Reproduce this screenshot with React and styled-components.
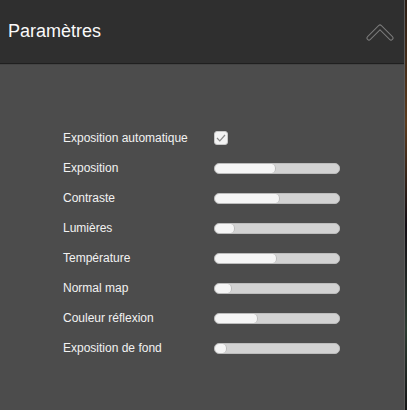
import React from 'react';
import styled, { createGlobalStyle } from 'styled-components';

const GlobalStyle = createGlobalStyle`
  html, body {
    margin: 0;
    padding: 0;
    height: 100%;
    background: linear-gradient(180deg, #2a1d14 0%, #5a3a1c 30%, #120d12 55%, #2c3a30 80%, #151515 100%);
    font-family: "Liberation Sans", Arial, sans-serif;
    overflow: hidden;
  }
`;

const Panel = styled.div`
  width: 405px;
  height: 410px;
  display: flex;
  flex-direction: column;
  background: #4c4c4c;
  border-right: 1px solid #5a5a5a;
  box-sizing: border-box;
`;

const Header = styled.div`
  height: 63px;
  flex: none;
  display: flex;
  align-items: center;
  justify-content: space-between;
  padding: 0 10px 0 8px;
  background: #2f2f2f;
  border-bottom: 1px solid #1f1f1f;
  box-shadow: 0 1px 0 #444;
`;

const Title = styled.h2`
  margin: 0;
  font-size: 18px;
  font-weight: normal;
  color: #fafafa;
`;

const Body = styled.div`
  display: grid;
  grid-template-columns: 151px 126px;
  grid-auto-rows: 30px;
  align-items: center;
  padding: 59px 0 0 63px;
`;

const Label = styled.span`
  font-size: 12px;
  color: #f2f2f2;
`;

const Checkbox = styled.div`
  width: 14px;
  height: 14px;
  box-sizing: border-box;
  border-radius: 3px;
  background: #f3f3f3;
  border: 1px solid #c8c8c8;
  display: flex;
  align-items: center;
  justify-content: center;
`;

const Track = styled.div`
  height: 11px;
  border-radius: 5px;
  background: #d2d2d2;
  border: 1px solid #bcbcbc;
  box-sizing: border-box;
  overflow: hidden;
  display: flex;
`;

const Fill = styled.div`
  height: 100%;
  border-radius: 5px;
  background: #f5f5f5;
  border-right: 1px solid #b8b8b8;
  box-sizing: border-box;
`;

function Chevron() {
  return (
    <svg width="28" height="20" viewBox="0 0 28 20" style={{ marginTop: 2 }}>
      <path d="M3 15 L14 4 L25 15" fill="none" stroke="#7a7a7a" strokeWidth="5" strokeLinecap="round" strokeLinejoin="round" />
      <path d="M3 15 L14 4 L25 15" fill="none" stroke="#2f2f2f" strokeWidth="3" strokeLinecap="round" strokeLinejoin="round" />
    </svg>
  );
}

const sliders = [
  { label: 'Exposition', value: 61 },
  { label: 'Contraste', value: 65 },
  { label: 'Lumières', value: 20 },
  { label: 'Température', value: 62 },
  { label: 'Normal map', value: 17 },
  { label: 'Couleur réflexion', value: 43 },
  { label: 'Exposition de fond', value: 12 },
];

export default function App() {
  return (
    <>
      <GlobalStyle />
      <Panel>
        <Header>
          <Title>Paramètres</Title>
          <Chevron />
        </Header>
        <Body>
          <Label>Exposition automatique</Label>
          <Checkbox>
            <svg width="10" height="8" viewBox="0 0 10 8">
              <path d="M1 4 L3.8 6.8 L9 1" fill="none" stroke="#8a8a8a" strokeWidth="1.2" />
            </svg>
          </Checkbox>
          {sliders.map(s => (
            <React.Fragment key={s.label}>
              <Label>{s.label}</Label>
              <Track>
                <Fill style={{ width: `${s.value}px` }} />
              </Track>
            </React.Fragment>
          ))}
        </Body>
      </Panel>
    </>
  );
}
